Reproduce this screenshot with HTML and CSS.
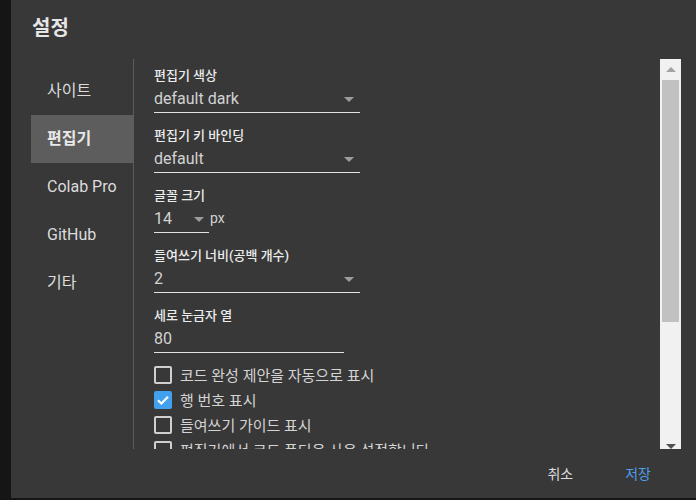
FILE: index.html
```html
<!DOCTYPE html>
<html lang="ko">
<head>
<meta charset="utf-8">
<link rel="stylesheet" href="styles.css">
</head>
<body>
<div class="dialog">
  <div class="title">설정</div>
  <div class="main">
    <nav class="sidebar">
      <div class="nav-item">사이트</div>
      <div class="nav-item selected">편집기</div>
      <div class="nav-item">Colab Pro</div>
      <div class="nav-item">GitHub</div>
      <div class="nav-item">기타</div>
    </nav>
    <div class="content">
      <div class="field">
        <div class="label">편집기 색상</div>
        <div class="select wide"><span>default dark</span><span class="arrow"></span></div>
      </div>
      <div class="field">
        <div class="label">편집기 키 바인딩</div>
        <div class="select wide"><span>default</span><span class="arrow"></span></div>
      </div>
      <div class="field">
        <div class="label">글꼴 크기</div>
        <div class="inline">
          <div class="select small"><span>14</span><span class="arrow"></span></div>
          <span class="unit">px</span>
        </div>
      </div>
      <div class="field">
        <div class="label">들여쓰기 너비(공백 개수)</div>
        <div class="select wide"><span>2</span><span class="arrow"></span></div>
      </div>
      <div class="field">
        <div class="label">세로 눈금자 열</div>
        <div class="select medium"><span>80</span></div>
      </div>
      <div class="checks">
        <div class="check-row"><span class="box"></span><span>코드 완성 제안을 자동으로 표시</span></div>
        <div class="check-row"><span class="box checked"><svg viewBox="0 0 18 18" width="18" height="18"><path d="M4 9.2 L7.4 12.5 L14 5.8" fill="none" stroke="#fff" stroke-width="2.2"/></svg></span><span>행 번호 표시</span></div>
        <div class="check-row"><span class="box"></span><span>들여쓰기 가이드 표시</span></div>
        <div class="check-row"><span class="box"></span><span>편집기에서 코드 폴딩을 사용 설정합니다</span></div>
      </div>
    </div>
    <div class="scrollbar">
      <div class="sb-up"><span class="tri-up"></span></div>
      <div class="sb-thumb"></div>
      <div class="sb-rest"></div>
      <div class="sb-down"><span class="tri-down"></span></div>
    </div>
  </div>
  <div class="footer">
    <span class="btn">취소</span>
    <span class="btn primary">저장</span>
  </div>
</div>
</body>
</html>
```
FILE: styles.css
```css
html, body {
  margin: 0;
  padding: 0;
  background: #151515;
  width: 696px;
  height: 500px;
  overflow: hidden;
  font-family: Roboto, "Noto Sans CJK KR", sans-serif;
}
.dialog {
  margin-left: 11px;
  width: 685px;
  height: 498px;
  background: #383838;
  display: flex;
  flex-direction: column;
}
.title {
  height: 59px;
  box-sizing: border-box;
  padding: 14px 0 0 21px;
  font-size: 20px;
  line-height: 28px;
  font-weight: bold;
  color: #e6e6e6;
}
.main {
  height: 390px;
  display: flex;
  padding-left: 20px;
}
.sidebar {
  width: 102px;
  border-right: 1px solid #5c5c5c;
  padding-top: 8px;
  box-sizing: content-box;
  flex: none;
}
.nav-item {
  height: 48px;
  line-height: 48px;
  padding-left: 16px;
  font-size: 16px;
  color: #dcdcdc;
}
.nav-item.selected {
  background: #5d5d5d;
  font-weight: bold;
  color: #e8e8e8;
}
.content {
  flex: 1;
  overflow: hidden;
  padding: 9px 0 0 20px;
}
.field {
  margin-bottom: 15px;
}
.label {
  font-size: 13px;
  line-height: 16px;
  font-weight: 500;
  color: #ececec;
}
.select {
  display: flex;
  justify-content: space-between;
  align-items: center;
  box-sizing: border-box;
  height: 29px;
  padding: 4px 0 2px 0;
  border-bottom: 1px solid #e2e2e2;
  font-size: 16px;
  line-height: 20px;
  color: #d2d2d2;
}
.select.wide { width: 206px; }
.select.medium { width: 190px; }
.select.small { width: 55px; }
.arrow {
  width: 0;
  height: 0;
  border-left: 5px solid transparent;
  border-right: 5px solid transparent;
  border-top: 5px solid #9c9c9c;
  margin-right: 6px;
}
.select.small .arrow { margin-right: 5px; }
.inline {
  display: flex;
  align-items: flex-start;
}
.unit {
  font-size: 14px;
  line-height: 20px;
  padding-top: 4px;
  margin-left: 1px;
  color: #d2d2d2;
}
.checks {
  margin-top: -6px;
}
.check-row {
  height: 25px;
  display: flex;
  align-items: center;
  font-size: 15px;
  color: #d4d4d4;
}
.box {
  width: 18px;
  height: 18px;
  box-sizing: border-box;
  border: 2px solid #cfcfcf;
  border-radius: 2px;
  margin-right: 8px;
  flex: none;
  display: flex;
}
.box.checked {
  background: #42a0ee;
  border: none;
}
.scrollbar {
  width: 21px;
  flex: none;
  margin-right: 15px;
  background: #f1f1f1;
  display: flex;
  flex-direction: column;
  align-items: center;
}
.sb-up {
  height: 21px;
  display: flex;
  align-items: center;
  justify-content: center;
}
.tri-up {
  width: 0;
  height: 0;
  border-left: 5px solid transparent;
  border-right: 5px solid transparent;
  border-bottom: 5px solid #a3a3a3;
}
.sb-thumb {
  width: 17px;
  height: 242px;
  background: #c1c1c1;
}
.sb-rest { flex: 1; }
.sb-down {
  height: 5px;
  display: flex;
  align-items: flex-end;
  justify-content: center;
}
.tri-down {
  width: 0;
  height: 0;
  border-left: 5px solid transparent;
  border-right: 5px solid transparent;
  border-top: 5px solid #505050;
}
.footer {
  flex: 1;
  display: flex;
  justify-content: flex-end;
  align-items: center;
  gap: 52px;
  padding-right: 45px;
  padding-top: 1px;
}
.btn {
  font-size: 14px;
  line-height: 20px;
  color: #dcdcdc;
}
.btn.primary { color: #4b9ee8; }
```
